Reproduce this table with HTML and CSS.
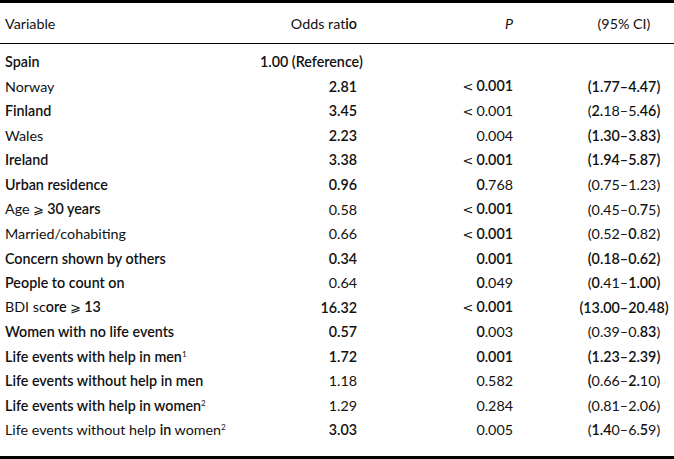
FILE: index.html
```html
<!DOCTYPE html>
<html lang="en">
<head>
<meta charset="utf-8">
<title>Odds ratios</title>
<link rel="stylesheet" href="styles.css">
</head>
<body>
<table class="odds">
  <colgroup>
    <col class="c-var">
    <col class="c-or">
    <col class="c-p">
    <col class="c-ci">
  </colgroup>
  <thead>
    <tr>
      <th class="var">Variable</th>
      <th class="or">Odds rat<b>io</b></th>
      <th class="p"><i>P</i></th>
      <th class="ci">(95% CI)</th>
    </tr>
  </thead>
  <tbody>
    <tr class="first"><td class="var b">Spain</td><td class="or ref b">1.00 (Reference)</td><td class="p"></td><td class="ci"></td></tr>
    <tr><td class="var">Norway</td><td class="or b">2.81</td><td class="p"><span class="lt">&lt;</span><b>0.001</b></td><td class="ci b">(1.77–4.47)</td></tr>
    <tr><td class="var b">Finland</td><td class="or b">3.45</td><td class="p"><span class="lt">&lt;</span>0.001</td><td class="ci">(<b>2.</b>18–5.<b>46)</b></td></tr>
    <tr><td class="var">Wales</td><td class="or b">2.23</td><td class="p">0.004</td><td class="ci b">(1.30–3.83)</td></tr>
    <tr><td class="var b">Ireland</td><td class="or b">3.38</td><td class="p"><span class="lt">&lt;</span><b>0.001</b></td><td class="ci b">(1.94–5.87)</td></tr>
    <tr><td class="var b">Urban residence</td><td class="or b">0.96</td><td class="p"><b>0</b>.768</td><td class="ci">(0.75–1.23)</td></tr>
    <tr><td class="var">Age <span class="ge">⩾</span><b>30 years</b></td><td class="or">0.58</td><td class="p"><span class="lt">&lt;</span><b>0.001</b></td><td class="ci">(0.45–0.<b>7</b>5)</td></tr>
    <tr><td class="var">Married/cohabiting</td><td class="or">0.66</td><td class="p"><span class="lt">&lt;</span><b>0.001</b></td><td class="ci">(0.52–<b>0</b>.82)</td></tr>
    <tr><td class="var b">Concern shown by others</td><td class="or b">0.34</td><td class="p b">0.001</td><td class="ci b">(0.18–0.62)</td></tr>
    <tr><td class="var b">People to count on</td><td class="or">0.64</td><td class="p"><b>0</b>.049</td><td class="ci">(<b>0</b>.41–<b>1.00)</b></td></tr>
    <tr><td class="var">BDI sc<b>ore</b> <span class="ge">⩾</span><b>13</b></td><td class="or b">16.32</td><td class="p"><span class="lt">&lt;</span><b>0.001</b></td><td class="ci b">(13.00–20.48)</td></tr>
    <tr><td class="var b">Women with no life events</td><td class="or b">0.57</td><td class="p"><b>0</b>.003</td><td class="ci">(0.39–0.<b>83</b>)</td></tr>
    <tr><td class="var b">Life events with help in men<sup>1</sup></td><td class="or b">1.72</td><td class="p b">0.001</td><td class="ci b">(1.23–2.39)</td></tr>
    <tr><td class="var b">Life events without help in men</td><td class="or">1.18</td><td class="p">0.582</td><td class="ci"><b>(</b>0.66–<b>2.</b>10)</td></tr>
    <tr><td class="var b">Life events with help in women<sup>2</sup></td><td class="or">1.29</td><td class="p">0.284</td><td class="ci">(0.81–2.06)</td></tr>
    <tr class="last"><td class="var">Life events without help <b>in</b> women<sup>2</sup></td><td class="or b">3.03</td><td class="p">0.005</td><td class="ci">(<b>1.4</b>0–6.<b>5</b>9)</td></tr>
  </tbody>
</table>
</body>
</html>
```

FILE: styles.css
```css
html, body {
  margin: 0;
  padding: 0;
  background: #ffffff;
}

body {
  font-family: "Lato", "Open Sans", "DejaVu Sans", sans-serif;
  font-size: 14.3px;
  color: #111111;
}

.odds {
  width: 674px;
  border-collapse: collapse;
  table-layout: fixed;
  border-top: 3px solid #000;
  border-bottom: 3px solid #000;
}

.c-var { width: 260px; }
.c-or { width: 112px; }
.c-p { width: 156px; }
.c-ci { width: 146px; }

.odds th,
.odds td {
  padding: 0;
  white-space: nowrap;
  font-weight: 400;
  line-height: 16px;
}

.odds b,
.odds .b {
  font-weight: 600;
}

.odds thead th {
  height: 38px;
  padding-top: 2px;
  border-bottom: 1px solid #000;
  vertical-align: middle;
}

.odds tbody td {
  height: 24.55px;
  vertical-align: middle;
}

.odds tbody tr.first td {
  padding-top: 6px;
}

.odds tbody tr.last td {
  padding-bottom: 13px;
}

.var {
  text-align: left;
  padding-left: 5px !important;
}

.or {
  text-align: right;
  padding-right: 15px !important;
}

.or.ref {
  text-align: left;
  padding-left: 0 !important;
  padding-right: 0 !important;
  overflow: visible;
}

.p {
  text-align: right;
  padding-right: 15px !important;
}

.ci {
  text-align: center;
  padding-left: 46px !important;
}

.lt {
  font-family: "DejaVu Sans", sans-serif;
  font-weight: 400;
  font-size: 13px;
  margin-right: 3px;
}

.ge {
  font-family: "DejaVu Sans", sans-serif;
  font-weight: 400;
  font-size: 13px;
  margin-right: 3px;
}

sup {
  font-size: 8px;
  line-height: 0;
  vertical-align: 5px;
  font-weight: 400;
}
```
